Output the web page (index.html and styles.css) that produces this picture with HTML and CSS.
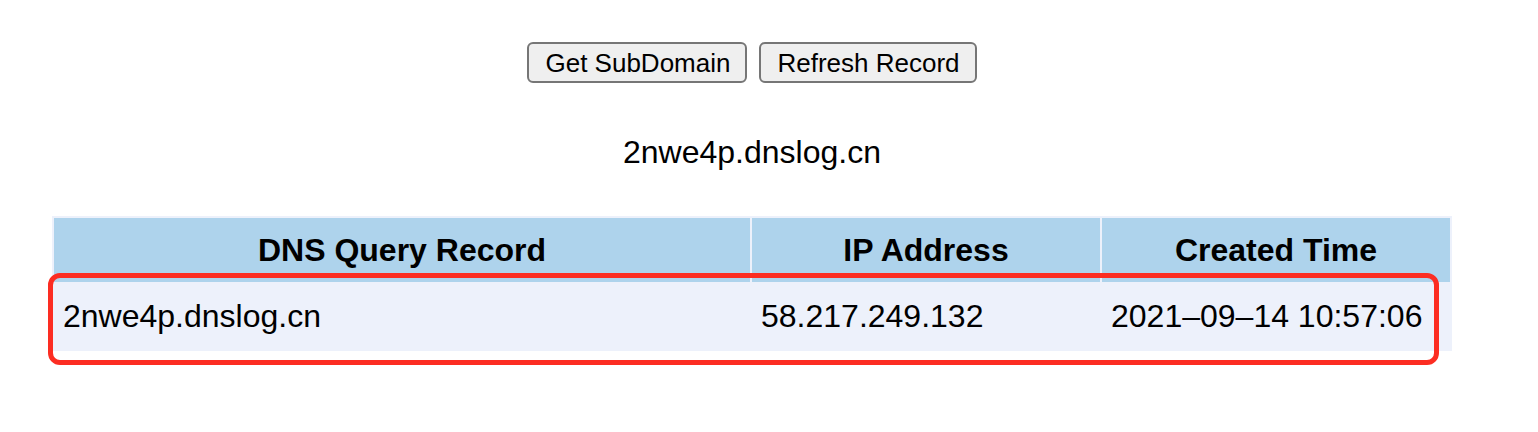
FILE: index.html
```html
<!DOCTYPE html>
<html>
<head>
<meta charset="utf-8">
<title>DNSLog</title>
<link rel="stylesheet" href="styles.css">
</head>
<body>
<div class="page">
  <div class="actions">
    <button class="btn">Get SubDomain</button>
    <button class="btn">Refresh Record</button>
  </div>
  <div class="domain">2nwe4p.dnslog.cn</div>
  <div class="table-wrap">
    <table class="records">
      <thead>
        <tr>
          <th class="col-wide">DNS Query Record</th>
          <th>IP Address</th>
          <th>Created Time</th>
        </tr>
      </thead>
      <tbody>
        <tr>
          <td>2nwe4p.dnslog.cn</td>
          <td>58.217.249.132</td>
          <td>2021–09–14 10:57:06</td>
        </tr>
      </tbody>
    </table>
    <div class="highlight"></div>
  </div>
</div>
</body>
</html>
```
FILE: styles.css
```css
html, body {
  margin: 0;
  padding: 0;
  background: #ffffff;
}
body {
  font-family: "Liberation Sans", Arial, sans-serif;
  color: #000;
  min-height: 432px;
}
.page {
  width: 1504px;
  display: flex;
  flex-direction: column;
  align-items: center;
  padding-bottom: 60px;
}
.actions {
  margin-top: 42px;
  display: flex;
  gap: 12px;
}
.btn {
  box-sizing: border-box;
  height: 41px;
  padding: 0 15px 0 16px;
  font-family: "Liberation Sans", Arial, sans-serif;
  font-size: 26px;
  line-height: 30px;
  color: #000;
  background: #efefef;
  border: 2px solid #767676;
  border-radius: 6px;
}
.domain {
  margin-top: 49px;
  font-size: 32px;
  line-height: 40px;
  height: 40px;
}
.table-wrap {
  position: relative;
  margin-top: 44px;
}
.records {
  width: 1400px;
  border-collapse: separate;
  border-spacing: 2px;
  background: #edf1fb;
  font-size: 32px;
  table-layout: fixed;
}
.records th {
  background: #aed3ec;
  height: 64px;
  padding: 0;
  font-weight: bold;
  text-align: center;
  vertical-align: middle;
}
.records th.col-wide {
  width: 696px;
}
.records td {
  height: 65px;
  padding: 0 0 0 9px;
  text-align: left;
  vertical-align: middle;
  background: #edf1fb;
}
.highlight {
  position: absolute;
  left: -4px;
  top: 57px;
  width: 1381px;
  height: 82px;
  border: 5px solid #fc2d22;
  border-radius: 12px;
  pointer-events: none;
}
```
